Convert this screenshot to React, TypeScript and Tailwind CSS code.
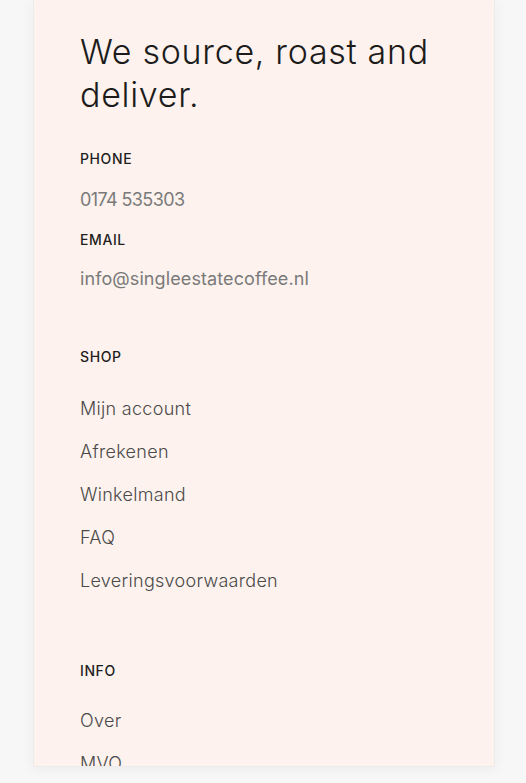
import React from "react";

const font = { fontFamily: "Inter, 'Noto Sans', sans-serif" };

export default function App() {
  const shop = ["Mijn account", "Afrekenen", "Winkelmand", "FAQ", "Leveringsvoorwaarden"];
  const info = ["Over", "MVO"];
  return (
    <div className="w-[526px] h-[783px] bg-[#f7f7f7] overflow-hidden" style={font}>
      <div className="ml-[33px] w-[462px] h-[767px] overflow-hidden bg-[#fdf2ed] border border-t-0 border-[#ececec] shadow-[0_2px_12px_rgba(0,0,0,0.05)]">
        <div className="pl-[46px] pt-[30px]">
          <h1 className="text-[34px] leading-[43px] font-light text-[#1c1c1c] tracking-[0.7px]">
            We source, roast and
            <br />
            deliver.
          </h1>
          <div className="mt-[33px] text-[14px] leading-[20px] font-medium text-[#1f1f1f] tracking-[0.6px]">PHONE</div>
          <div className="mt-[18.5px] text-[18px] leading-[24px] font-normal text-[#7a7a7a] tracking-[-0.6px]">0174 535303</div>
          <div className="mt-[18.5px] text-[14px] leading-[20px] font-medium text-[#1f1f1f] tracking-[0.6px]">EMAIL</div>
          <div className="mt-[16.5px] text-[18px] leading-[24px] font-normal text-[#7a7a7a] tracking-[0.1px]">info@singleestatecoffee.nl</div>
          <div className="mt-[56.5px] text-[14px] leading-[20px] font-medium text-[#1f1f1f] tracking-[0.6px]">SHOP</div>
          <ul className="mt-[20px]">
            {shop.map((s) => (
              <li key={s} className="text-[18px] leading-[43px] font-light text-[#4a4a4a] tracking-[0.3px]">{s}</li>
            ))}
          </ul>
          <div className="mt-[59px] text-[14px] leading-[20px] font-medium text-[#1f1f1f] tracking-[0.6px]">INFO</div>
          <ul className="mt-[18px]">
            {info.map((s) => (
              <li key={s} className="text-[18px] leading-[43px] font-light text-[#4a4a4a] tracking-[0.3px]">{s}</li>
            ))}
          </ul>
        </div>
      </div>
    </div>
  );
}
